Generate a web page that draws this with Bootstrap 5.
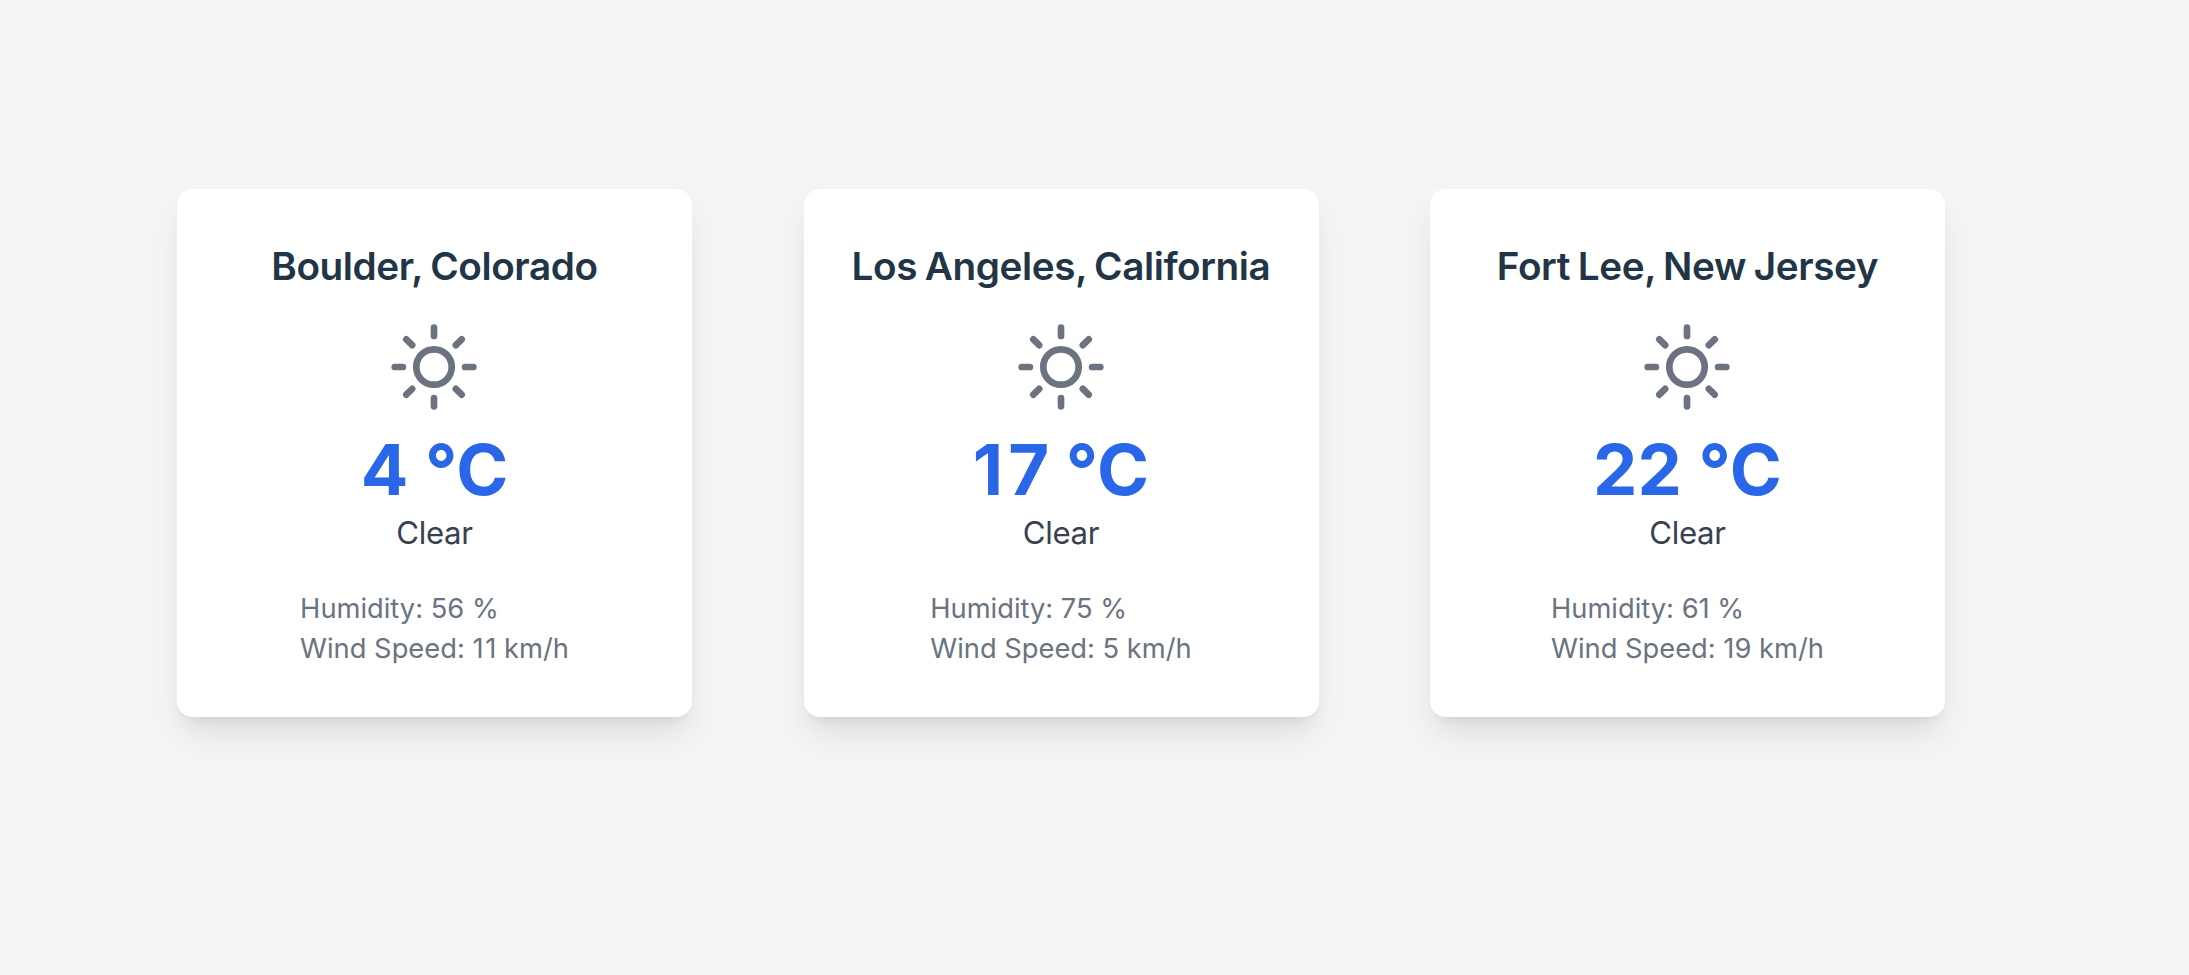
<!DOCTYPE html>
<html lang="en">
<head>
<meta charset="utf-8">
<meta name="viewport" content="width=device-width, initial-scale=1">
<title>Weather</title>
<link href="https://cdn.jsdelivr.net/npm/bootstrap@5.3.0/dist/css/bootstrap.min.css" rel="stylesheet">
<style>
body { background: #f3f4f6; font-family: Inter, "Liberation Sans", sans-serif; }
.board { padding: 189px 0 0 177px; gap: 111.5px; }
.weather { width: 515px; height: 527.7px; padding-top: 52.5px; border-radius: 16px;
  box-shadow: 0 20px 30px -6px rgba(0,0,0,.1), 0 8px 12px -8px rgba(0,0,0,.1); }
.city { font-size: 38.7px; line-height: 48px; font-weight: 600; letter-spacing: -.4px; word-spacing: -1.6px; color: #213547; margin-bottom: 34.3px; }
.sun { width: 86px; height: 86px; color: #6b7280; margin: 0 1px 20.4px 0; }
.temp { font-size: 70.5px; line-height: 80px; font-weight: 700; color: #2a67e8; margin-bottom: 3.3px; }
.temp .one { letter-spacing: 5px; }
.sky { font-size: 31.2px; line-height: 40px; letter-spacing: -.35px; color: #374151; margin-bottom: 35.4px; }
.facts { font-size: 27.3px; line-height: 40px; color: #6b7280; }
.facts .one { letter-spacing: 1.7px; }
</style>
</head>
<body>
<main class="board min-vh-100 d-flex align-items-start">
  <section class="weather bg-white d-flex flex-column align-items-center flex-shrink-0">
    <h2 class="city text-nowrap">Boulder, Colorado</h2>
    <svg class="sun" viewBox="0 0 86 86" fill="none" stroke="currentColor" stroke-width="6.7" stroke-linecap="round"><circle cx="43" cy="43" r="17.7"/><path d="M43 3.7v8.2M43 74.1v8.2M3.7 43h8.2M74.1 43h8.2M15.3 15.3l5.9 5.9M64.8 64.8l5.9 5.9M15.3 70.7l5.9-5.9M64.8 21.2l5.9-5.9"/></svg>
    <div class="temp">4 °C</div>
    <div class="sky">Clear</div>
    <div class="facts"><div>Humidity: 56 %</div><div>Wind Speed: <span class="one">1</span>1 km/h</div></div>
  </section>
  <section class="weather bg-white d-flex flex-column align-items-center flex-shrink-0">
    <h2 class="city text-nowrap">Los Angeles, California</h2>
    <svg class="sun" viewBox="0 0 86 86" fill="none" stroke="currentColor" stroke-width="6.7" stroke-linecap="round"><circle cx="43" cy="43" r="17.7"/><path d="M43 3.7v8.2M43 74.1v8.2M3.7 43h8.2M74.1 43h8.2M15.3 15.3l5.9 5.9M64.8 64.8l5.9 5.9M15.3 70.7l5.9-5.9M64.8 21.2l5.9-5.9"/></svg>
    <div class="temp"><span class="one">1</span>7 °C</div>
    <div class="sky">Clear</div>
    <div class="facts"><div>Humidity: 75 %</div><div>Wind Speed: 5 km/h</div></div>
  </section>
  <section class="weather bg-white d-flex flex-column align-items-center flex-shrink-0">
    <h2 class="city text-nowrap">Fort Lee, New Jersey</h2>
    <svg class="sun" viewBox="0 0 86 86" fill="none" stroke="currentColor" stroke-width="6.7" stroke-linecap="round"><circle cx="43" cy="43" r="17.7"/><path d="M43 3.7v8.2M43 74.1v8.2M3.7 43h8.2M74.1 43h8.2M15.3 15.3l5.9 5.9M64.8 64.8l5.9 5.9M15.3 70.7l5.9-5.9M64.8 21.2l5.9-5.9"/></svg>
    <div class="temp">22 °C</div>
    <div class="sky">Clear</div>
    <div class="facts"><div>Humidity: 61 %</div><div>Wind Speed: 19 km/h</div></div>
  </section>
</main>
<script src="https://cdn.jsdelivr.net/npm/bootstrap@5.3.0/dist/js/bootstrap.bundle.min.js"></script>
</body>
</html>
